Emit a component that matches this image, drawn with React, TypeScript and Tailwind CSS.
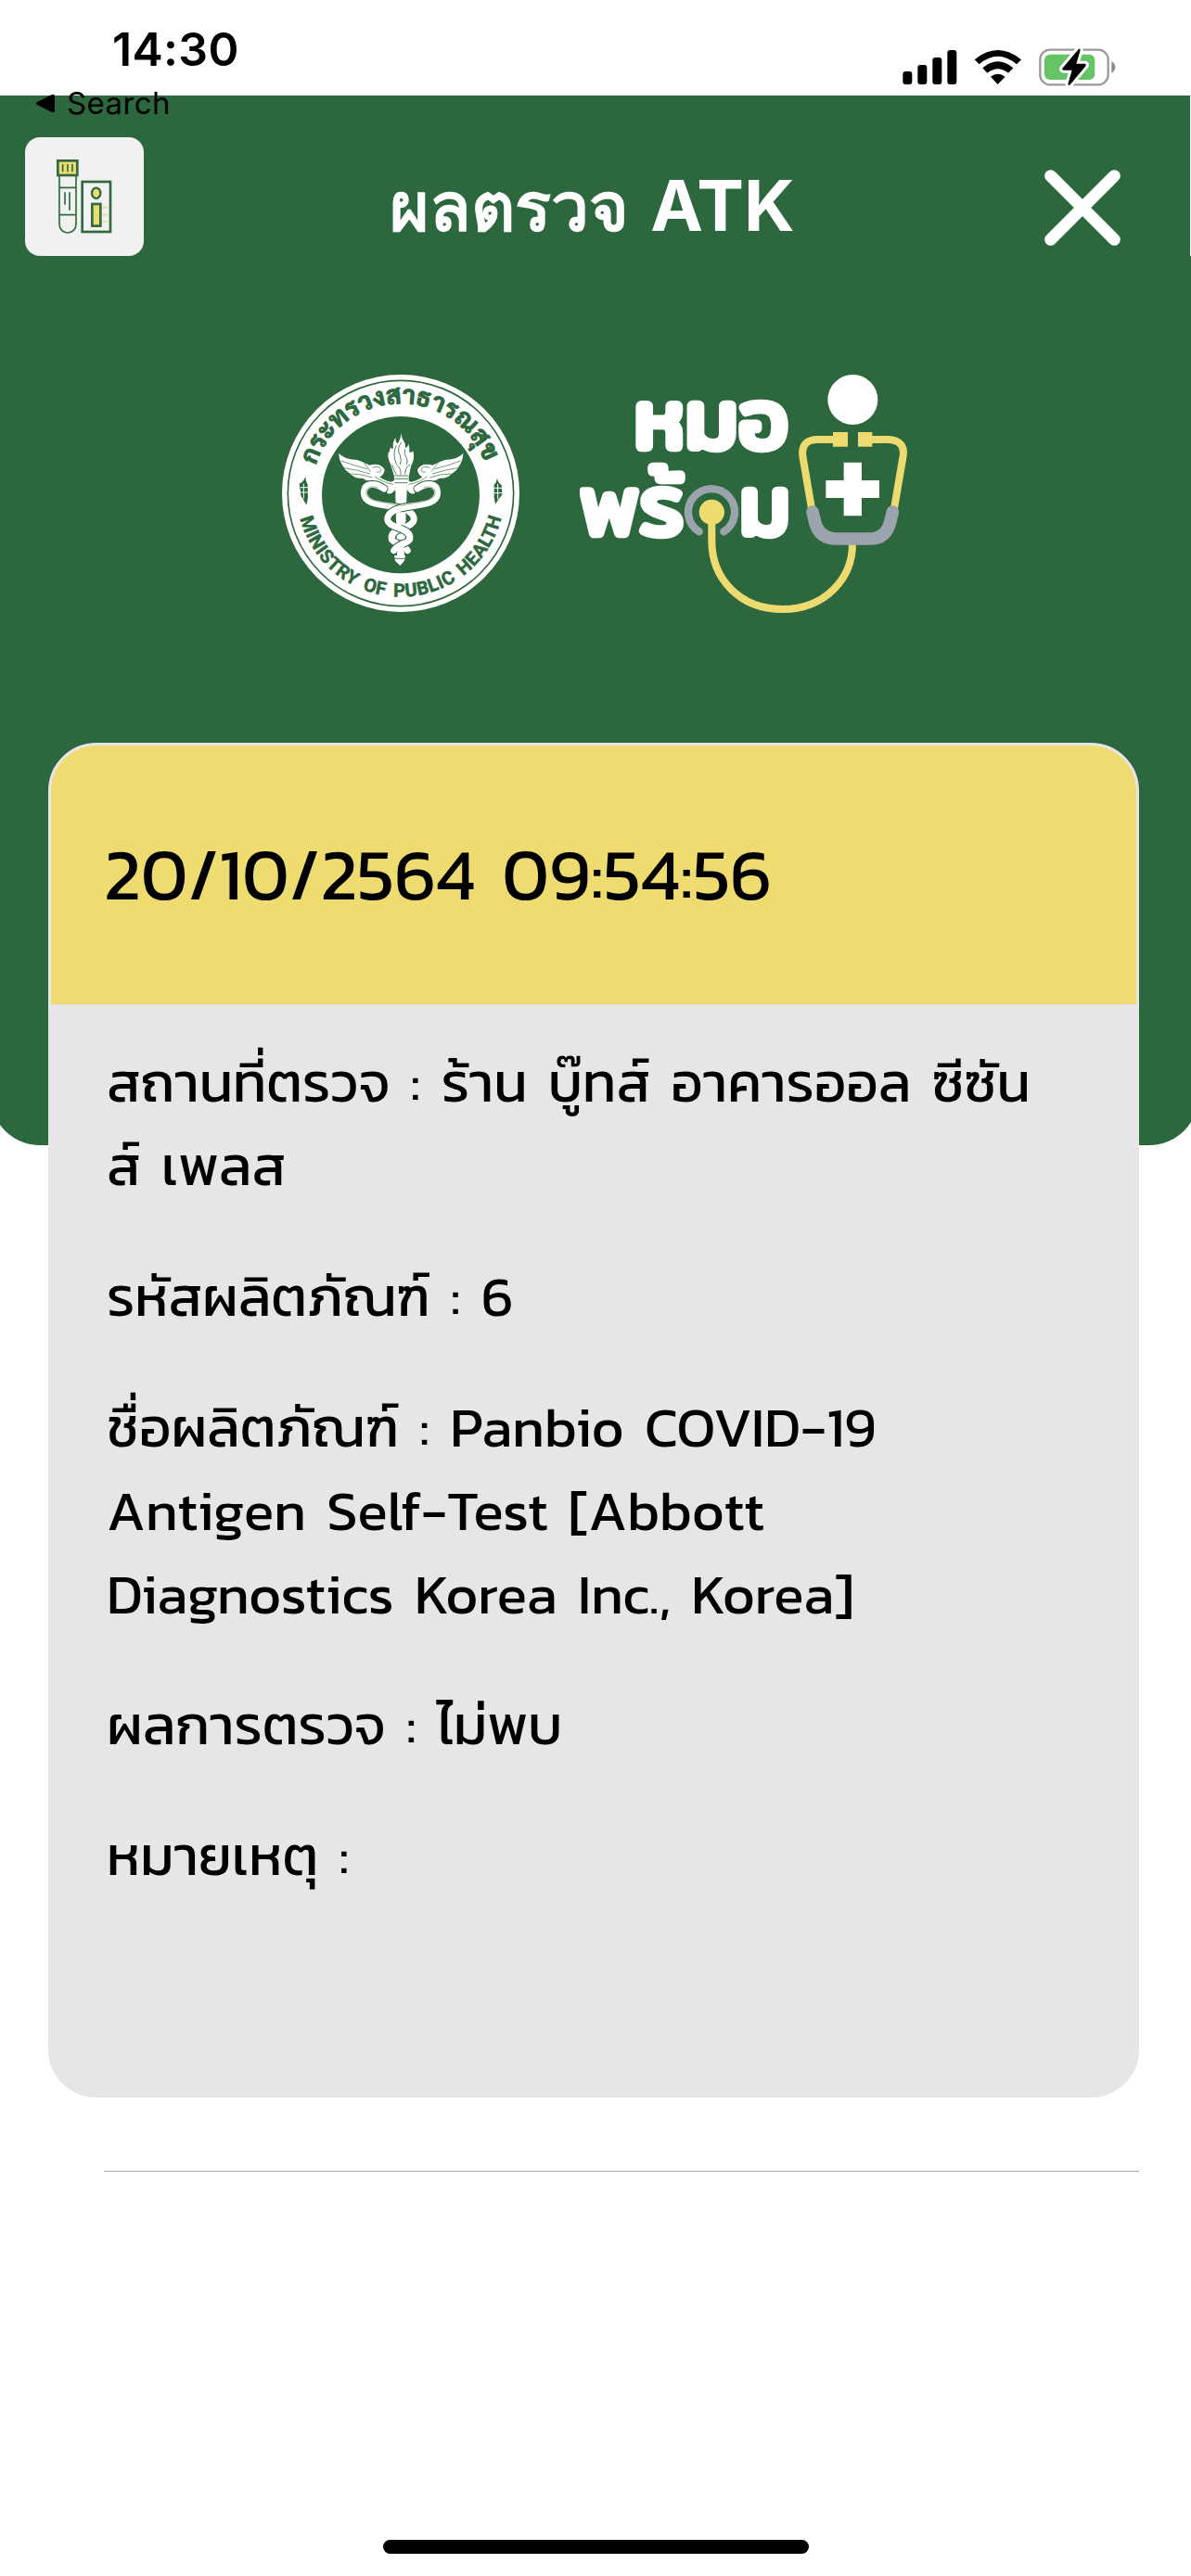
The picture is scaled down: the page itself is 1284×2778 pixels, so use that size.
type Result = { label: string; lines: string[] };

const takenAt = "20/10/2564 09:54:56";

const results: Result[] = [
  { label: "สถานที่ตรวจ", lines: ["ร้าน บู๊ทส์ อาคารออล ซีซัน", "ส์ เพลส"] },
  { label: "รหัสผลิตภัณฑ์", lines: ["6"] },
  {
    label: "ชื่อผลิตภัณฑ์",
    lines: ["Panbio COVID-19", "Antigen Self-Test [Abbott", "Diagnostics Korea Inc., Korea]"],
  },
  { label: "ผลการตรวจ", lines: ["ไม่พบ"] },
  { label: "หมายเหตุ", lines: [""] },
];

const snakePath =
  "M372 412 C345 392 308 392 307 425 C308 470 385 462 430 476 C472 488 482 518 450 532 C415 545 392 552 397 576 C402 590 436 590 448 612";

function StatusIcons() {
  return (
    <svg className="mt-[52px] h-[42px] w-[230px]" viewBox="218 156 690 126">
      <rect x="219" y="231" width="30" height="42" rx="9" />
      <rect x="267" y="210" width="30" height="63" rx="9" />
      <rect x="315" y="186" width="30" height="87" rx="9" />
      <rect x="363" y="162" width="30" height="111" rx="9" />
      {/* Wifi */}
      <path d="M451 193 Q526 131 602 193 L587 208 Q526 157 466 208 Z" />
      <path d="M477 220 Q526 178 576 220 L560 236 Q526 209 492 236 Z" />
      <path d="M503 248 Q526 230 550 248 L526 273 Z" />
      {/* Battery */}
      <rect x="663" y="161" width="220" height="113" rx="32" fill="none" stroke="#9b9b9b" strokeWidth="7" />
      <path d="M894 199 Q906 205 906 217 Q906 230 894 236 Z" fill="#8c8c8c" />
      <rect x="677" y="176" width="163" height="82" rx="18" fill="#65c466" />
      <path
        d="M788 158 L735 221 Q733 226 738 227 H766 L753 272 Q754 278 760 274 L811 213 Q813 207 808 206 H780 L793 163 Q793 157 788 158 Z"
        stroke="#fff"
        strokeWidth="18"
        strokeLinejoin="round"
        paintOrder="stroke"
      />
    </svg>
  );
}

function TestKitIcon() {
  return (
    <svg className="size-32" viewBox="81 444 384 384" fill="none" stroke="#33693f">
      <path d="M192 568 V726 a27 27 0 0 0 54 0 V568 M192 607 H246 M192 695 H246" strokeWidth="5" />
      <path d="M210 622 V662 M225 622 V680" strokeWidth="5" />
      <rect x="187" y="520" width="63" height="47" fill="#e9dd72" strokeWidth="8" />
      <path d="M203 531 V556 M219 531 V556 M234 531 V556" strokeWidth="5" />
      <rect x="266" y="588" width="91" height="162" strokeWidth="8" />
      <ellipse cx="311" cy="625" rx="14" ry="17" fill="#e9dd72" strokeWidth="7" />
      <rect x="298" y="660" width="27" height="71" fill="#e9dd72" strokeWidth="8" />
      <path d="M332 671 H348 M332 695 H348 M332 717 H348" stroke="#f0d98a" strokeWidth="5" />
    </svg>
  );
}

function Wing() {
  return (
    <g>
      <path
        d="M226 297 Q238 315 285 319 Q305 325 325 336 Q360 326 374 350 Q372 368 358 374 Q372 386 394 390 L408 384 V416 Q396 432 384 428 Q374 408 346 406 Q324 398 330 388 Q312 386 302 378 Q276 380 264 364 Q246 354 240 340 Q226 320 226 297 Z"
        fill="#fff"
      />
      <path
        d="M234 322 Q270 336 318 348 M244 345 Q282 350 326 364 M266 364 Q300 364 334 376 M306 326 L328 356 M334 344 Q356 336 362 350 Q360 362 348 358 M342 372 Q366 392 402 398 M350 396 L362 398"
        fill="none"
        stroke="#2d673d"
        strokeWidth="2"
      />
    </g>
  );
}

function Snake() {
  return (
    <g fill="none" strokeLinecap="round">
      <path d={snakePath} stroke="#2d673d" strokeWidth="27" />
      <path d={snakePath} stroke="#fff" strokeWidth="21" />
      <path
        d="M350 408 C325 402 314 410 315 428 C320 458 385 455 426 468"
        stroke="#2d673d"
        strokeWidth="1.5"
        strokeDasharray="3 2"
      />
    </g>
  );
}

function MinistrySeal() {
  return (
    <svg className="size-64" viewBox="42 43 768 768">
      <circle cx="426" cy="427" r="384" fill="#fff" />
      <circle cx="426" cy="427" r="365" fill="none" stroke="#2d673d" strokeWidth="5" />
      <ellipse cx="426" cy="432" rx="255" ry="254" fill="#2d673d" />
      <path id="seal-top" d="M151 337 A289 289 0 0 1 701 337" fill="none" />
      <path id="seal-bottom" d="M101 508 A335 335 0 0 0 751 508" fill="none" />
      <text
        className="font-[Sarabun,'Noto_Sans',sans-serif] text-[82px] font-bold"
        fill="#2d673d"
        stroke="#2d673d"
        strokeWidth="2.5"
      >
        <textPath href="#seal-top" textLength="716" lengthAdjust="spacing">
          กระทรวงสาธารณสุข
        </textPath>
      </text>
      <text
        className="font-[Roboto,sans-serif] text-[60px] font-bold [word-spacing:10px]"
        fill="#2d673d"
        stroke="#2d673d"
        strokeWidth="1.5"
      >
        <textPath href="#seal-bottom" textLength="890" lengthAdjust="spacing">
          MINISTRY OF PUBLIC HEALTH
        </textPath>
      </text>
      <g fill="#2d673d">
        <path d="M118 373 Q120 392 125 398 L126 440 L122 464 Q112 452 110 444 Q100 436 102 420 L98 396 Q112 390 118 373 Z" />
        <path d="M738 378 Q740 392 752 400 L754 432 Q742 444 732 462 L728 440 V400 Q736 392 738 378 Z" />
        <path d="M102 408 H126 M102 424 H126 M112 396 V444 M728 410 H753 M728 426 H753 M740 396 V446" stroke="#fff" strokeWidth="3" />
      </g>
      {/* Torch with wings and two snakes */}
      <Wing />
      <g transform="matrix(-1 0 0 1 854 0)">
        <Wing />
      </g>
      <path d="M408 392 H447 L438 632 H414 Z" fill="#fff" />
      <Snake />
      <g transform="matrix(-1 0 0 1 852 0)">
        <Snake />
      </g>
      <path d="M412 488 H441 L439 530 H413 Z M415 590 H437 V630 H415 Z" fill="#fff" />
      <path d="M405 628 H441 L438 645 L424 661 L408 645 Z" fill="#fff" />
      <path d="M393 332 H461 L452 372 V394 H405 V372 Z" fill="#fff" />
      <path
        d="M428 230 Q428 248 436 258 Q443 268 441 280 Q452 276 450 264 Q456 280 454 294 Q462 296 466 290 Q472 312 462 334 H394 Q382 312 386 296 Q392 292 392 278 Q398 286 402 280 Q398 262 410 246 Q408 262 416 266 Q426 252 428 230 Z"
        fill="#fff"
      />
      <path
        d="M412 272 Q398 300 412 332 M428 262 Q412 284 424 304 Q430 320 424 334 M440 284 Q434 300 446 314 Q450 326 444 334 M398 334 Q402 352 412 366 M412 334 Q428 346 426 366 M456 334 Q440 342 440 366 M406 370 H450 M406 380 H450 M406 393 H448 M406 638 H440"
        fill="none"
        stroke="#2d673d"
        strokeWidth="2.5"
      />
    </svg>
  );
}

function MorPromLogo() {
  return (
    <svg className="h-[257px] w-[354px]" viewBox="75 42 1062 771" fill="none">
      <g
        className="font-[Mitr,Kanit,'Noto_Sans',sans-serif] text-[276px] font-normal"
        fill="#fff"
        stroke="#fff"
        strokeWidth="20"
        strokeLinejoin="round"
      >
        <text x="250" y="283" textLength="500" lengthAdjust="spacingAndGlyphs">หมอ</text>
        <text x="74" y="562" textLength="338" lengthAdjust="spacingAndGlyphs">พร้</text>
        <text x="592" y="562" textLength="164" lengthAdjust="spacingAndGlyphs">ม</text>
      </g>
      <path d="M461 550 A75 75 0 1 1 541 550" stroke="#9ba3ad" strokeWidth="25" strokeLinecap="round" />
      <path d="M502 490 V580 C502 700 590 801 730 801 C870 801 957 700 957 590" stroke="#eddb70" strokeWidth="24" />
      <circle cx="502" cy="487" r="41" fill="#eddb70" />
      <circle cx="958" cy="123" r="81" fill="#fff" />
      <path d="M900 252 H845 Q790 252 796 305 L825 475 M1015 252 H1075 Q1128 256 1121 305 L1092 475" stroke="#eddb70" strokeWidth="24" />
      <path d="M894 228 h48 v47 h-48 Z M975 228 h46 v47 h-46 Z" fill="#eddb70" />
      <path d="M828 486 L836 520 Q850 573 905 573 H1015 Q1065 573 1079 520 L1087 486" stroke="#9ba3ad" strokeWidth="41" strokeLinecap="round" />
      <path d="M929 326 H987 V384 H1044 V441 H987 V499 H929 V441 H871 V384 H929 Z" fill="#fff" />
    </svg>
  );
}

function ResultCard() {
  return (
    <section className="relative -mt-[434px] ml-[52px] h-[1461px] w-[1176px] overflow-hidden rounded-[52px] border-[3px] border-[#e6e6e8] bg-[#e6e6e8]">
      <header className="flex h-[279px] items-center bg-[#eedc70] pl-[57px]">
        <h2 className="-mt-0.5 whitespace-nowrap text-[78px] leading-none font-normal [word-spacing:11px]">{takenAt}</h2>
      </header>
      <div className="flex flex-col gap-[51px] pt-[39px] pl-[60px] text-[60px] leading-[90px] whitespace-nowrap [word-spacing:8.500px]">
        {results.map(({ label, lines }) => (
          <p key={label}>
            {label} : {lines[0]}
            {lines.slice(1).map((line) => (
              <span key={line} className="block">{line}</span>
            ))}
          </p>
        ))}
      </div>
    </section>
  );
}

export default function App() {
  return (
    <main className="relative h-[2778px] w-[1284px] overflow-hidden bg-white font-[Kanit,'Noto_Sans',sans-serif] text-black">
      <div className="flex h-[103px] items-start justify-between pr-[81px] pl-[121px] font-[Inter,sans-serif]">
        <span className="pt-7 text-[50px] leading-[50px] font-semibold tracking-[0.3px]">14:30</span>
        <StatusIcons />
      </div>

      {/* Back link straddles the status bar and the green panel */}
      <div className="absolute top-[91px] left-[38px] z-10 flex items-center gap-3 font-[Inter,sans-serif] text-[33px] leading-10 tracking-[0.4px]">
        <svg className="h-[21px] w-[22px]" viewBox="0 0 22 21">
          <path d="M2 9 L18 1 Q21 0 21 3 V18 Q21 21 18 20 L2 12 Q0 10.500 2 9 Z" />
        </svg>
        Search
      </div>

      <div className="-mr-2 -ml-2.5 h-[1132px] rounded-b-[53px] bg-[#2d673d] pt-[45px] pr-2 pl-2.5">
        <div className="flex items-center justify-between pr-[76px] pl-[27px]">
          <div className="rounded-2xl bg-[#f1f1f1]">
            <TestKitIcon />
          </div>
          <h1 className="mt-[17px] mr-1 flex items-baseline gap-[23px] font-[Inter,'Noto_Sans',sans-serif] text-[76px] leading-[100px] font-bold text-white">
            <span className="font-['Noto_Sans',sans-serif] text-[73px]">ผลตรวจ</span>
            <span>ATK</span>
          </h1>
          <svg className="mt-6 size-[82px]" viewBox="0 0 246 246" stroke="#fff" strokeWidth="39" strokeLinecap="round">
            <path d="M20 20 L226 226 M226 20 L20 226" />
          </svg>
        </div>
        <div className="mt-32 flex gap-[65px] pl-[304px]">
          <MinistrySeal />
          <MorPromLogo />
        </div>
      </div>
      <div className="absolute top-[103px] right-0 h-[173px] w-px bg-white" />

      <ResultCard />
      <hr className="mt-[79px] mr-14 ml-28 border-t border-[#a8a8a8]" />
      <div className="mx-auto mt-[397px] h-[15px] w-[459px] rounded-full bg-black" />
    </main>
  );
}
